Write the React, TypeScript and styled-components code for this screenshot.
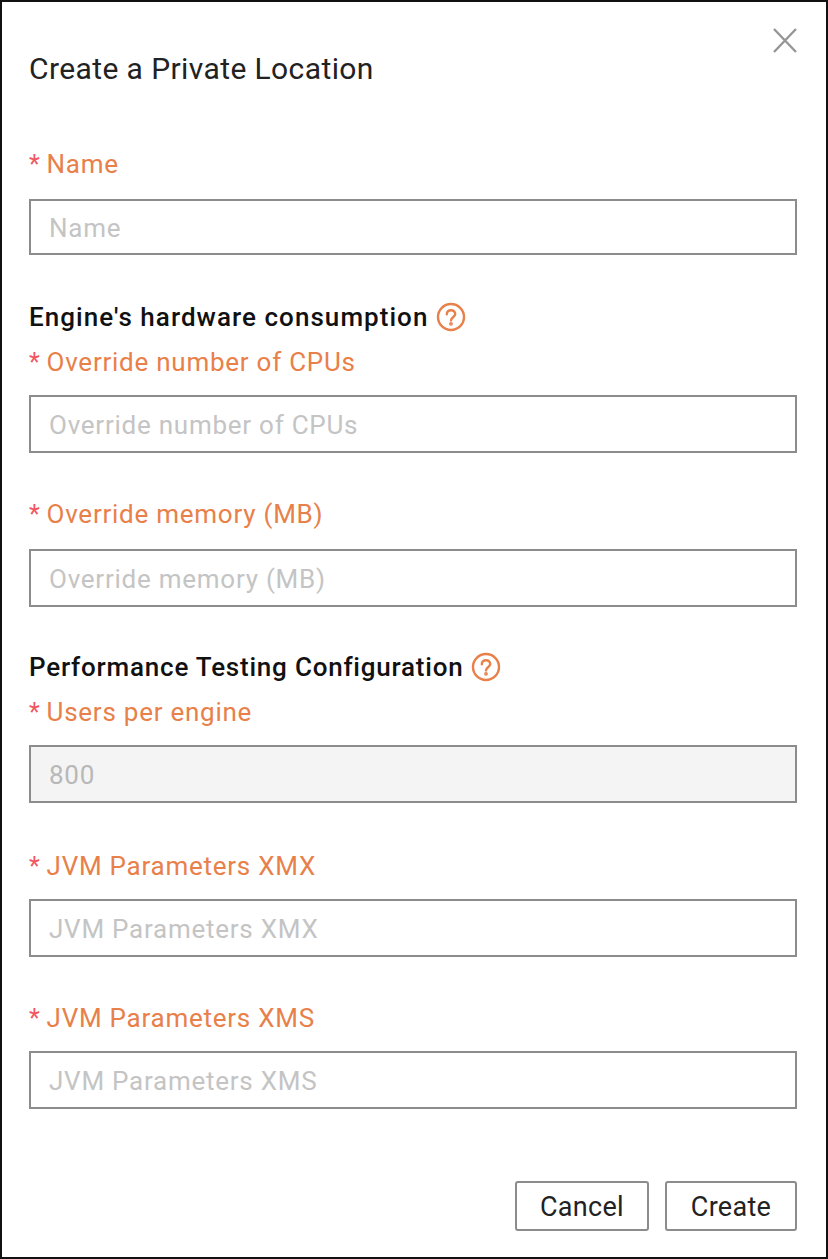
import { createGlobalStyle } from 'styled-components';
import styled from 'styled-components';

const GlobalStyle = createGlobalStyle`
  html, body {
    margin: 0;
    padding: 0;
    background: #fff;
  }
  * {
    box-sizing: border-box;
  }
`;

interface FieldProps {
  label: string;
  top: number;
  gap?: number;
  height?: number;
  value?: string;
}

function Field({ label, top, gap = 16, height = 58, value }: FieldProps) {
  return (
    <FieldWrapper $top={top}>
      <Label $gap={gap}>
        <Star>*</Star>
        {label}
      </Label>
      {value ? (
        <Input $height={height} value={value} disabled readOnly />
      ) : (
        <Input $height={height} placeholder={label} />
      )}
    </FieldWrapper>
  );
}

function HelpIcon() {
  return (
    <svg width='30' height='30' viewBox='0 0 30 30' fill='none' stroke='#e8804a' strokeWidth='2.400'>
      <circle cx='15' cy='15' r='13' />
      <path d='M10.8 12.2c0-2.5 1.900-4 4.200-4s4.200 1.500 4.200 3.800c0 3.200-4.200 3.300-4.200 6.400' strokeLinecap='round' />
      <circle cx='15' cy='21.800' r='0.700' fill='#e8804a' />
    </svg>
  );
}

export default function App() {
  return (
    <Dialog>
      <GlobalStyle />
      <CloseButton aria-label='Close'>
        <svg width='24' height='25' viewBox='0 0 24 25' stroke='#969696' strokeWidth='2.400' fill='none'>
          <path d='M1 1l22 23M23 1L1 24' />
        </svg>
      </CloseButton>
      <Title>Create a Private Location</Title>
      <Field label='Name' top={61} gap={18} height={56} />
      <Section $top={45} $spacing={1.05}>
        Engine's hardware consumption
        <HelpIcon />
      </Section>
      <Field label='Override number of CPUs' top={11} />
      <Field label='Override memory (MB)' top={44} gap={18} />
      <Section $top={43} $spacing={0.78}>
        Performance Testing Configuration
        <HelpIcon />
      </Section>
      <Field label='Users per engine' top={11} value='800' />
      <Field label='JVM Parameters XMX' top={46} />
      <Field label='JVM Parameters XMS' top={44} />
      <Footer>
        <Button $width={134}>Cancel</Button>
        <Button $width={132}>Create</Button>
      </Footer>
    </Dialog>
  );
}

const Dialog = styled.div`
  position: relative;
  width: 828px;
  height: 1259px;
  padding: 50px 29px 0 27px;
  border: 2px solid #111;
  background: #fff;
  font-family: Roboto, 'Noto Sans', sans-serif;
`;

const CloseButton = styled.button`
  position: absolute;
  top: 26px;
  right: 29px;
  display: flex;
  padding: 0;
  border: 0;
  background: none;
`;

const Title = styled.h1`
  margin: 0;
  height: 34px;
  font-size: 30px;
  font-weight: 400;
  line-height: 34px;
  letter-spacing: 0.4px;
  color: #222;
`;

const FieldWrapper = styled.div<{ $top: number }>`
  margin-top: ${({ $top }) => $top}px;
`;

const Label = styled.label<{ $gap: number }>`
  display: block;
  height: 34px;
  margin-bottom: ${({ $gap }) => $gap}px;
  font-size: 26px;
  line-height: 34px;
  letter-spacing: 0.75px;
  color: #e8804a;
`;

const Star = styled.span`
  margin-right: 6px;
  font-size: 25px;
  color: #f0575f;
`;

const Input = styled.input<{ $height: number }>`
  display: block;
  width: 100%;
  height: ${({ $height }) => $height}px;
  padding: 2px 18px 0;
  border: 2px solid #8c8c8c;
  border-radius: 0;
  outline: none;
  background: #fff;
  font-family: inherit;
  font-size: 26px;
  letter-spacing: 0.75px;
  color: #b8b8b8;

  &::placeholder {
    color: #c4c4c4;
    opacity: 1;
  }

  &:disabled {
    background: #f4f4f4;
  }
`;

const Section = styled.div<{ $top: number; $spacing: number }>`
  display: flex;
  align-items: center;
  gap: 8px;
  height: 34px;
  margin-top: ${({ $top }) => $top}px;
  font-size: 26px;
  font-weight: 500;
  letter-spacing: ${({ $spacing }) => $spacing}px;
  color: #111;
`;

const Footer = styled.div`
  display: flex;
  justify-content: flex-end;
  gap: 16px;
  margin-top: 72px;
`;

const Button = styled.button<{ $width: number }>`
  width: ${({ $width }) => $width}px;
  height: 50px;
  padding: 1px 0 0;
  border: 2px solid #8c8c8c;
  border-radius: 3px;
  background: #fff;
  font-family: inherit;
  font-size: 27px;
  letter-spacing: 0.3px;
  color: #222;
`;
